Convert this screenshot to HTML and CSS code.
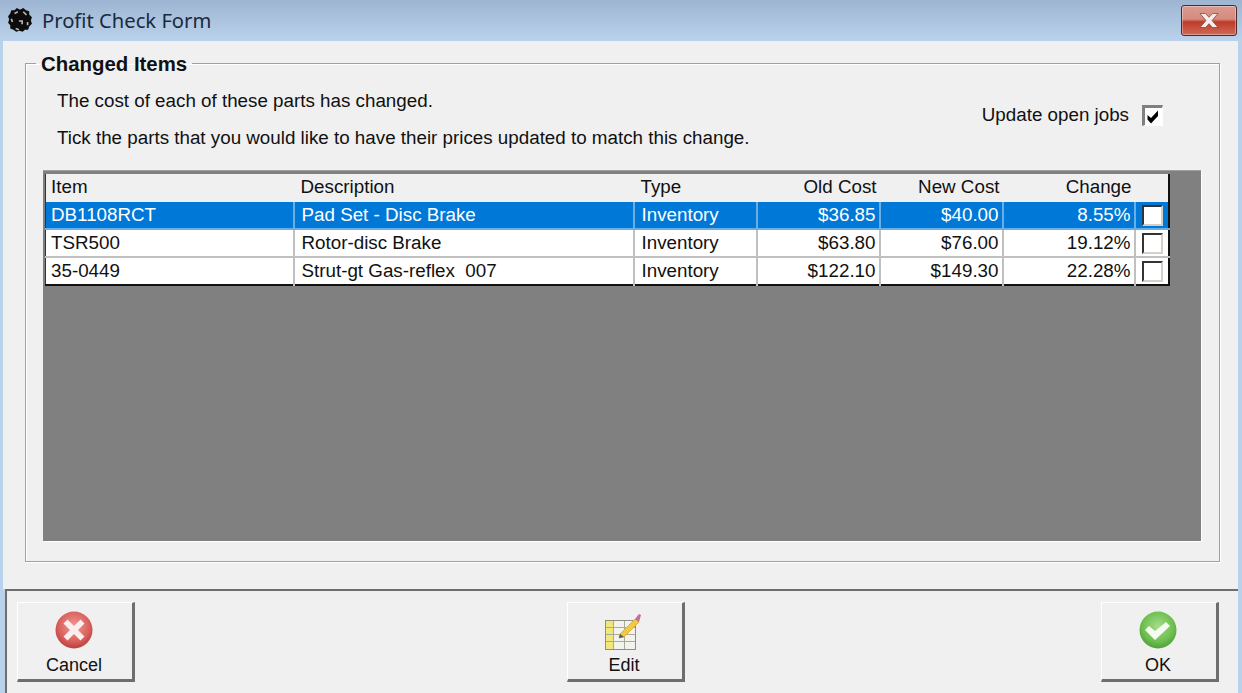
FILE: index.html
```html
<!DOCTYPE html>
<html lang="en">
<head>
    <meta charset="UTF-8">
    <meta name="viewport" content="width=device-width, initial-scale=1.0">
    <title>Profit Check Form</title>
    <link rel="stylesheet" href="styles.css">
</head>
<body>
    <div class="window">
        <div class="title-bar">
            <svg class="app-icon" width="26" height="26" viewBox="1 1 24 24">
                <path d="M10 1l3 1.500 3-1.500 2.500 2 3 1 0 3 2.500 2.500-1 3 1 3-2.500 2.500-1 3-3 0-2 2-3-1-3 1-2.500-2-3-1 0-3-2-2.500 1-3-1-3 2-2.500 1-3 3 0z" fill="#0c0c0c"/>
                <path d="M8 6l3-1.500M16 4.500l3 3M5 11l1 3M12 13l3 0 0 3M9 20l3 1M20 14l0 3" stroke="#b8b8b8" stroke-width="1.500" fill="none"/>
            </svg>
            <span class="title-text">Profit Check Form</span>
            <div class="close-btn">
                <svg width="20" height="15" viewBox="0 0 20 15">
                    <path d="M1 0.500h5.500l3.500 3.800 3.500-3.800h5.500l-6 7 6 7h-5.500l-3.500-3.800-3.500 3.800h-5.500l6-7z" fill="#f6efee" stroke="#7d3a34" stroke-width="0.700"/>
                </svg>
            </div>
        </div>

        <div class="content">
            <fieldset class="group-box">
                <legend class="group-title">Changed Items</legend>
                <div class="intro-row">
                    <div class="intro-text">
                        <p>The cost of each of these parts has changed.</p>
                        <p>Tick the parts that you would like to have their prices updated to match this change.</p>
                    </div>
                    <div class="update-jobs">
                        <span>Update open jobs</span>
                        <span class="checkbox checked">
                            <svg width="15" height="15" viewBox="0 0 15 15">
                                <path d="M1.500 6l3.500 3 7-7.500v5.500l-7 7.500-3.500-4z" fill="#000"/>
                            </svg>
                        </span>
                    </div>
                </div>

                <div class="grid-area">
                    <table class="parts-table">
                        <colgroup>
                            <col class="col-item">
                            <col class="col-desc">
                            <col class="col-type">
                            <col class="col-cost">
                            <col class="col-cost">
                            <col class="col-change">
                            <col class="col-tick">
                        </colgroup>
                        <thead>
                            <tr>
                                <th>Item</th>
                                <th>Description</th>
                                <th>Type</th>
                                <th class="num">Old Cost</th>
                                <th class="num">New Cost</th>
                                <th class="num">Change</th>
                                <th></th>
                            </tr>
                        </thead>
                        <tbody>
                            <tr class="selected">
                                <td>DB1108RCT</td>
                                <td>Pad Set - Disc Brake</td>
                                <td>Inventory</td>
                                <td class="num">$36.85</td>
                                <td class="num">$40.00</td>
                                <td class="num">8.55%</td>
                                <td class="tick"><span class="checkbox"></span></td>
                            </tr>
                            <tr>
                                <td>TSR500</td>
                                <td>Rotor-disc Brake</td>
                                <td>Inventory</td>
                                <td class="num">$63.80</td>
                                <td class="num">$76.00</td>
                                <td class="num">19.12%</td>
                                <td class="tick"><span class="checkbox"></span></td>
                            </tr>
                            <tr>
                                <td>35-0449</td>
                                <td>Strut-gt Gas-reflex&nbsp; 007</td>
                                <td>Inventory</td>
                                <td class="num">$122.10</td>
                                <td class="num">$149.30</td>
                                <td class="num">22.28%</td>
                                <td class="tick"><span class="checkbox"></span></td>
                            </tr>
                        </tbody>
                    </table>
                </div>
            </fieldset>
        </div>

        <div class="footer">
            <div class="tool-btn">
                <svg width="40" height="40" viewBox="0 0 40 40">
                    <defs>
                        <radialGradient id="redBall" cx="50%" cy="40%" r="60%">
                            <stop offset="0" stop-color="#ee9a96"/>
                            <stop offset="0.7" stop-color="#d9605c"/>
                            <stop offset="1" stop-color="#b8403c"/>
                        </radialGradient>
                    </defs>
                    <circle cx="20" cy="20" r="18.500" fill="url(#redBall)"/>
                    <path d="M13.500 9.500l6.500 6.500 6.500-6.500 4 4-6.500 6.500 6.500 6.500-4 4-6.500-6.500-6.500 6.500-4-4 6.500-6.500-6.500-6.500z" fill="#fbeeee"/>
                </svg>
                <span>Cancel</span>
            </div>
            <div class="tool-btn edit-btn">
                <svg width="40" height="40" viewBox="0 0 40 40">
                    <rect x="1.500" y="10.500" width="30" height="29" fill="#f3f3ee" stroke="#8f8f80"/>
                    <rect x="2" y="11" width="7" height="28" fill="#f1e77a"/>
                    <path d="M2 17.500h29M2 24.500h29M2 31.500h29M9.500 11v28M20.500 11v28" stroke="#a9a99c" fill="none"/>
                    <path d="M16 24l15-15 4 3-15 15-5 1z" fill="#f3c93f" stroke="#d0a832" stroke-width="0.800"/>
                    <path d="M16 24l-1 4 5-1z" fill="#555"/>
                    <path d="M31 9l4-5 2 1-2 7z" fill="#c46aa5"/>
                </svg>
                <span>Edit</span>
            </div>
            <div class="tool-btn">
                <svg width="40" height="40" viewBox="0 0 40 40">
                    <defs>
                        <radialGradient id="greenBall" cx="50%" cy="40%" r="60%">
                            <stop offset="0" stop-color="#a6dc8c"/>
                            <stop offset="0.7" stop-color="#6cbf4f"/>
                            <stop offset="1" stop-color="#4fa03a"/>
                        </radialGradient>
                    </defs>
                    <circle cx="20" cy="20" r="18.500" fill="url(#greenBall)"/>
                    <path d="M7 20l4-4 6 5 11-9 4 4-15 14z" fill="#f6fbf2"/>
                </svg>
                <span>OK</span>
            </div>
        </div>
    </div>
</body>
</html>
```

FILE: styles.css
```css
html, body {
    margin: 0;
    padding: 0;
}

body {
    width: 1242px;
    height: 693px;
    overflow: hidden;
    font-family: 'Liberation Sans', Arial, sans-serif;
    font-size: 18.8px;
    color: #111;
    background-color: #b9d1ea;
}

.window {
    display: flex;
    flex-direction: column;
    height: 693px;
    padding: 0 4px 0 3px;
    box-sizing: border-box;
}

.title-bar {
    display: flex;
    align-items: center;
    height: 41px;
    margin: 0 -4px 0 -3px;
    padding: 0 4px 0 7px;
    flex-shrink: 0;
    background: linear-gradient(#9db5d2, #bad2eb);
}

.app-icon {
    margin-right: 9px;
}

.title-text {
    padding-bottom: 2px;
    font-family: 'Noto Sans', sans-serif;
    font-size: 20.2px;
    color: #1a2a40;
}

.close-btn {
    display: flex;
    align-items: center;
    justify-content: center;
    width: 56px;
    height: 31px;
    margin-left: auto;
    margin-top: -1px;
    margin-right: 1px;
    border: 1px solid #4a2a2a;
    border-radius: 3px;
    box-sizing: border-box;
    background: linear-gradient(#dc9a90 0%, #d58a7e 45%, #c03a28 55%, #d06a58 100%);
    box-shadow: inset 0 0 0 1px rgba(255, 255, 255, 0.35);
}

.content {
    flex: 1;
    padding: 11px 18px 27px 22px;
    background-color: #f0f0f0;
}

.group-box {
    display: flex;
    flex-direction: column;
    height: 100%;
    margin: 0;
    padding: 12px 18px 20px 17px;
    border: 1px solid #a0a0a0;
    box-shadow: 1px 1px 0 #fff, inset 1px 1px 0 #fff;
    box-sizing: border-box;
}

.group-title {
    margin-left: -7px;
    padding: 2px 5px 0;
    font-size: 20.4px;
    font-weight: bold;
    line-height: 21px;
}

.intro-row {
    display: flex;
    justify-content: space-between;
    height: 83px;
    flex-shrink: 0;
    padding-left: 14px;
}

.intro-text {
    margin-top: 3px;
}

.intro-text p {
    margin: 0 0 16px;
    line-height: 21px;
}

.update-jobs {
    display: flex;
    align-items: center;
    gap: 13px;
    align-self: flex-start;
    margin-top: 17px;
    margin-right: 38px;
}

.checkbox {
    display: inline-flex;
    align-items: center;
    justify-content: center;
    width: 21px;
    height: 21px;
    box-sizing: border-box;
    border: 2px solid #333;
    border-right-color: #d4d0c8;
    border-bottom-color: #d4d0c8;
    background-color: #fff;
}

.checkbox.checked {
    border-width: 3px 1px 1px 3px;
    border-color: #808080 #fff #fff #808080;
}

.grid-area {
    flex: 1;
    padding: 3px 30px 0 2px;
    background-color: #808080;
    border-top: 1px solid #a0a0a0;
    box-shadow: 1px 1px 0 #fff;
}

.parts-table {
    width: 1123px;
    table-layout: fixed;
    border-collapse: collapse;
    background-color: #fff;
    border-right: 2px solid #111;
    border-bottom: 2px solid #111;
    border-left: 1px solid #333;
}

.col-item { width: 248px; }
.col-desc { width: 340px; }
.col-type { width: 123px; }
.col-cost { width: 123px; }
.col-cost { width: 123px; }
.col-change { width: 132px; }
.col-tick { width: 34px; }

.parts-table th {
    height: 26px;
    padding: 0 3px 2px 7px;
    font-weight: normal;
    text-align: left;
    background-color: #f0f0f0;
}

.parts-table td {
    height: 25px;
    padding: 0 3px 1px 7px;
    border-right: 2px solid #c0c0c0;
    border-bottom: 2px solid #c0c0c0;
    white-space: nowrap;
}

.parts-table th:first-child,
.parts-table td:first-child {
    padding-left: 5px;
}

.parts-table .num {
    text-align: right;
}

.parts-table td.tick {
    padding: 0 0 0 6px;
    border-right: none;
    line-height: 0;
}

.parts-table tbody tr:last-child td {
    border-bottom: none;
}

.parts-table .selected td {
    background-color: #0078d7;
    color: #fff;
    border-color: #6aaee6;
}

.footer {
    display: flex;
    justify-content: space-between;
    align-items: flex-start;
    height: 104px;
    flex-shrink: 0;
    margin-left: 2px;
    padding: 11px 19px 0 10px;
    box-sizing: border-box;
    background-color: #f0f0f0;
    border-top: 2px solid #6e6e6e;
    border-left: 2px solid #6e6e6e;
}

.tool-btn {
    display: flex;
    flex-direction: column;
    align-items: center;
    width: 118px;
    height: 80px;
    padding: 7px 2px 0 0;
    box-sizing: border-box;
    border: 1px solid #fff;
    border-right: 3px solid #6e6e6e;
    border-bottom: 3px solid #6e6e6e;
    font-size: 18px;
    line-height: 21px;
}

.tool-btn span {
    margin-top: 5px;
}

.edit-btn {
    margin-left: 16px;
}
```
